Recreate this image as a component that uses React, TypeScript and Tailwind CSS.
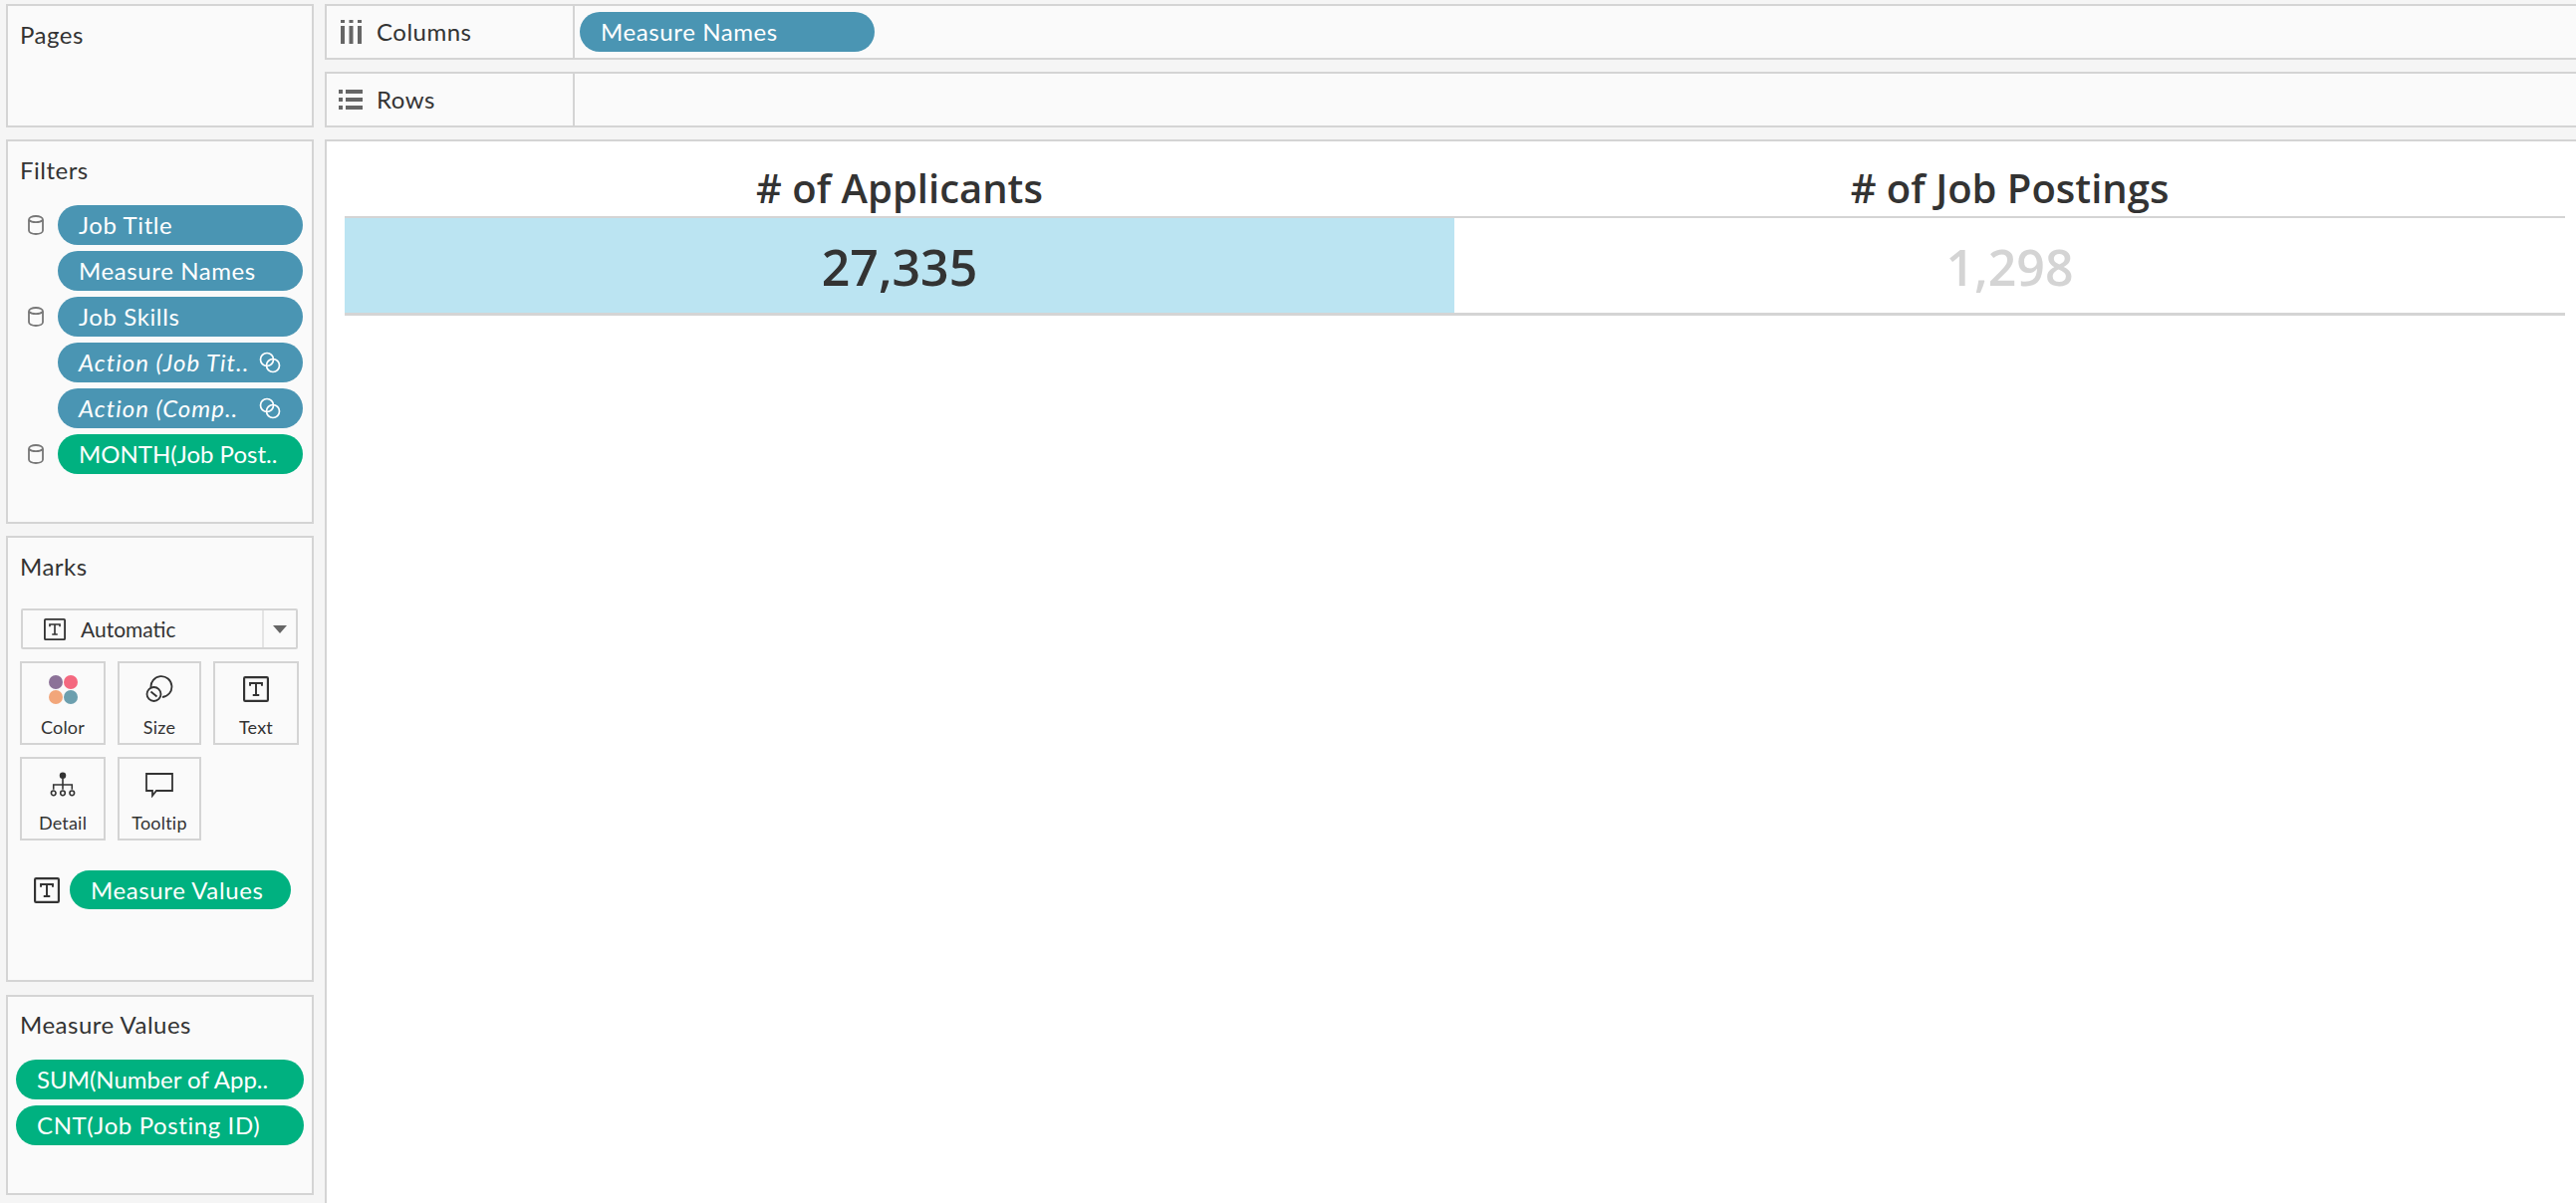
import type { ReactNode } from "react";

const font = "font-['Lato','Liberation_Sans',sans-serif]";
const headFont = "font-['Open_Sans','Liberation_Sans',sans-serif]";

function TextIcon({ className }: { className: string }) {
  return (
    <svg viewBox="0 0 24 24" fill="none" stroke="#333" className={className}>
      <rect x="1" y="1" width="22" height="22" rx="1" strokeWidth="2" />
      <path d="M6.500 9V6.500h11V9M12 6.500v11M9 17.500h6" strokeWidth="1.800" />
    </svg>
  );
}

function Cylinder() {
  return (
    <svg viewBox="0 0 16 20" fill="none" stroke="#777" strokeWidth="1.800" className="w-4 h-5">
      <path d="M1 4.500C1 2.500 4 1 8 1s7 1.500 7 3.500v11c0 2-3 3.500-7 3.500s-7-1.500-7-3.500z" />
      <path d="M1 5c1.500 1.500 4 2.200 7 2.200S13.500 6.500 15 5" />
    </svg>
  );
}

function LinkIcon() {
  return (
    <svg viewBox="0 0 22 22" fill="none" stroke="#fff" strokeWidth="1.700" className="w-[22px] h-[22px] absolute right-[22px] top-[9px]">
      <circle cx="8" cy="8" r="6.500" />
      <circle cx="14" cy="14" r="6.500" />
    </svg>
  );
}

function Pill({
  children,
  green,
  italic,
  link,
  tight,
  className,
}: {
  children: ReactNode;
  green?: boolean;
  italic?: boolean;
  link?: boolean;
  tight?: boolean;
  className: string;
}) {
  return (
    <div
      className={`relative flex items-center h-10 rounded-[20px] pl-[21px] text-[24px] leading-none text-white whitespace-nowrap ${
        green ? "bg-[#00b180]" : "bg-[#4a95b3]"
      } ${italic ? "italic tracking-[1px]" : tight ? "tracking-normal" : "tracking-[0.6px]"} ${className}`}
    >
      {children}
      {link && <LinkIcon />}
    </div>
  );
}

function FilterRow({ label, db, green, italic, link, tight }: { label: string; db?: boolean; green?: boolean; italic?: boolean; link?: boolean; tight?: boolean }) {
  return (
    <div className="flex items-center">
      <div className="w-[50px] pl-[20px] flex">{db && <Cylinder />}</div>
      <Pill green={green} italic={italic} link={link} tight={tight} className="w-[246px]">
        {label}
      </Pill>
    </div>
  );
}

function Panel({ title, className, children }: { title: string; className: string; children?: ReactNode }) {
  return (
    <section className={`border-2 border-[#d4d4d4] bg-[#fafafa] ${className}`}>
      <div className="pl-[12px] text-[24px] tracking-[0.5px] leading-[30px] text-[#333]">{title}</div>
      {children}
    </section>
  );
}

function MarkButton({ label, width, children }: { label: string; width: string; children: ReactNode }) {
  return (
    <div className={`${width} h-[84px] border-2 border-[#d4d4d4] flex flex-col items-center`}>
      <div className="h-[50px] flex items-center justify-center">{children}</div>
      <div className="mt-[3px] text-[18px] tracking-[0.2px] leading-[22px] text-[#333]">{label}</div>
    </div>
  );
}

function ShelfRow({ label, icon, children }: { label: string; icon: ReactNode; children?: ReactNode }) {
  return (
    <div className="h-[56px] border-2 border-r-0 border-[#d4d4d4] bg-[#fafafa] flex">
      <div className="w-[249px] border-r-2 border-[#d4d4d4] flex items-center pl-[12px] gap-[14px] text-[24px] tracking-[0.5px] text-[#333]">
        <div className="w-6 flex justify-center">{icon}</div>
        {label}
      </div>
      <div className="flex-1 flex items-center pl-[5px] pb-[1px]">{children}</div>
    </div>
  );
}

export default function App() {
  return (
    <div className={`${font} w-[2586px] h-[1208px] overflow-hidden bg-[#f5f5f5] flex pt-[4px] pl-[6px] gap-[11px]`}>
      {/* Left cards */}
      <div className="w-[309px] flex flex-col gap-[12px]">
        <Panel title="Pages" className="h-[124px] pt-[14px]" />

        <Panel title="Filters" className="h-[386px] pt-[14px]">
          <div className="mt-[20px] flex flex-col gap-[6px]">
            <FilterRow label="Job Title" db />
            <FilterRow label="Measure Names" />
            <FilterRow label="Job Skills" db />
            <FilterRow label="Action (Job Tit.." italic link />
            <FilterRow label="Action (Comp.." italic link />
            <FilterRow label="MONTH(Job Post.." green db tight />
          </div>
        </Panel>

        <Panel title="Marks" className="h-[448px] pt-[14px]">
          <div className="ml-[13px] mt-[27px] w-[278px] h-[41px] border-2 border-[#d4d4d4] rounded-[2px] flex items-center">
            <div className="w-[240px] flex items-center pl-[21px] gap-[15px] text-[21px] text-[#333]">
              <TextIcon className="w-[22px] h-[22px]" />
              Automatic
            </div>
            <div className="flex-1 h-full border-l-2 border-[#e4e4e4] flex items-center justify-center">
              <div className="w-0 h-0 border-x-[7px] border-x-transparent border-t-[8px] border-t-[#666]" />
            </div>
          </div>

          <div className="ml-[12px] mt-[12px] flex gap-[12px]">
            <MarkButton label="Color" width="w-[86px]">
              <div className="grid grid-cols-2 gap-[1px] mt-[2px]">
                <span className="w-[14px] h-[14px] rounded-full bg-[#8c7298]" />
                <span className="w-[14px] h-[14px] rounded-full bg-[#f4687f]" />
                <span className="w-[14px] h-[14px] rounded-full bg-[#f2a67a]" />
                <span className="w-[14px] h-[14px] rounded-full bg-[#6c9fae]" />
              </div>
            </MarkButton>
            <MarkButton label="Size" width="w-[84px]">
              <svg viewBox="0 0 28 28" fill="none" stroke="#333" strokeWidth="1.800" className="w-7 h-7 mt-[2px]">
                <path d="M5.500 12.500A10.500 10.500 0 1 1 17 22" />
                <circle cx="8.500" cy="19" r="7" />
                <path d="M5.500 16.500l6 5" />
              </svg>
            </MarkButton>
            <MarkButton label="Text" width="w-[86px]">
              <TextIcon className="w-[26px] h-[26px] mt-[2px]" />
            </MarkButton>
          </div>

          <div className="ml-[12px] mt-[12px] flex gap-[12px]">
            <MarkButton label="Detail" width="w-[86px]">
              <svg viewBox="0 0 28 30" fill="none" stroke="#333" strokeWidth="1.700" className="w-[26px] h-[28px] mt-[2px]">
                <circle cx="14" cy="5" r="3.500" fill="#333" stroke="none" />
                <path d="M14 8v12M4 20v-5h20v5" />
                <circle cx="4" cy="24" r="2.500" />
                <circle cx="14" cy="24" r="2.500" />
                <circle cx="24" cy="24" r="2.500" />
              </svg>
            </MarkButton>
            <MarkButton label="Tooltip" width="w-[84px]">
              <svg viewBox="0 0 28 26" fill="none" stroke="#333" strokeWidth="1.800" className="w-7 h-[26px] mt-[2px]">
                <path d="M1 2h26v17H11l-4 5v-5H1z" />
              </svg>
            </MarkButton>
          </div>

          <div className="mt-[30px] ml-[26px] flex items-center gap-[10px]">
            <TextIcon className="w-[26px] h-[26px]" />
            <Pill green className="w-[222px] !h-[39px]">
              Measure Values
            </Pill>
          </div>
        </Panel>

        <Panel title="Measure Values" className="h-[201px] mt-[1px] pt-[13px]">
          <div className="mt-[20px] ml-[8px] flex flex-col gap-[6px]">
            <Pill green tight className="w-[289px]">SUM(Number of App..</Pill>
            <Pill green className="w-[289px]">CNT(Job Posting ID)</Pill>
          </div>
        </Panel>
      </div>

      {/* Shelves and view */}
      <div className="flex-1 flex flex-col">
        <ShelfRow
          label="Columns"
          icon={
            <svg viewBox="0 0 21 24" fill="#666" className="w-[21px] h-6">
              <path d="M0 0h4v3H0zM8.500 0h4v3h-4zM17 0h4v3h-4zM0 6h4v18H0zM8.500 6h4v18h-4zM17 6h4v18h-4z" />
            </svg>
          }
        >
          <Pill className="w-[296px]">Measure Names</Pill>
        </ShelfRow>
        <div className="h-[12px]" />
        <ShelfRow
          label="Rows"
          icon={
            <svg viewBox="0 0 24 20" fill="#666" className="w-6 h-5">
              <path d="M0 0h4v4H0zM7 0h17v4H7zM0 8h4v4H0zM7 8h17v4H7zM0 16h4v4H0zM7 16h17v4H7z" />
            </svg>
          }
        />
        <div className="h-[12px]" />
        <main className={`${headFont} flex-1 border-2 border-r-0 border-b-0 border-[#d4d4d4] bg-white pl-[18px] pr-[11px]`}>
          <div className="grid grid-cols-[1114px_1fr] text-center text-[#333]">
            <div className="h-[77px] pt-[19px] flex items-center justify-center text-[40px] font-semibold border-b-2 border-[#d4d4d4]">
              # of Applicants
            </div>
            <div className="h-[77px] pt-[19px] flex items-center justify-center text-[40px] font-semibold border-b-2 border-[#d4d4d4]">
              # of Job Postings
            </div>
            <div className="h-[98px] pt-[3px] flex items-center justify-center bg-[#bbe4f2] text-[50px] font-semibold border-b-[3px] border-[#d4d4d4]">
              27,335
            </div>
            <div className="h-[98px] pt-[3px] flex items-center justify-center text-[50px] font-semibold text-[#d4d4d4] border-b-[3px] border-[#d4d4d4]">
              1,298
            </div>
          </div>
        </main>
      </div>
    </div>
  );
}
